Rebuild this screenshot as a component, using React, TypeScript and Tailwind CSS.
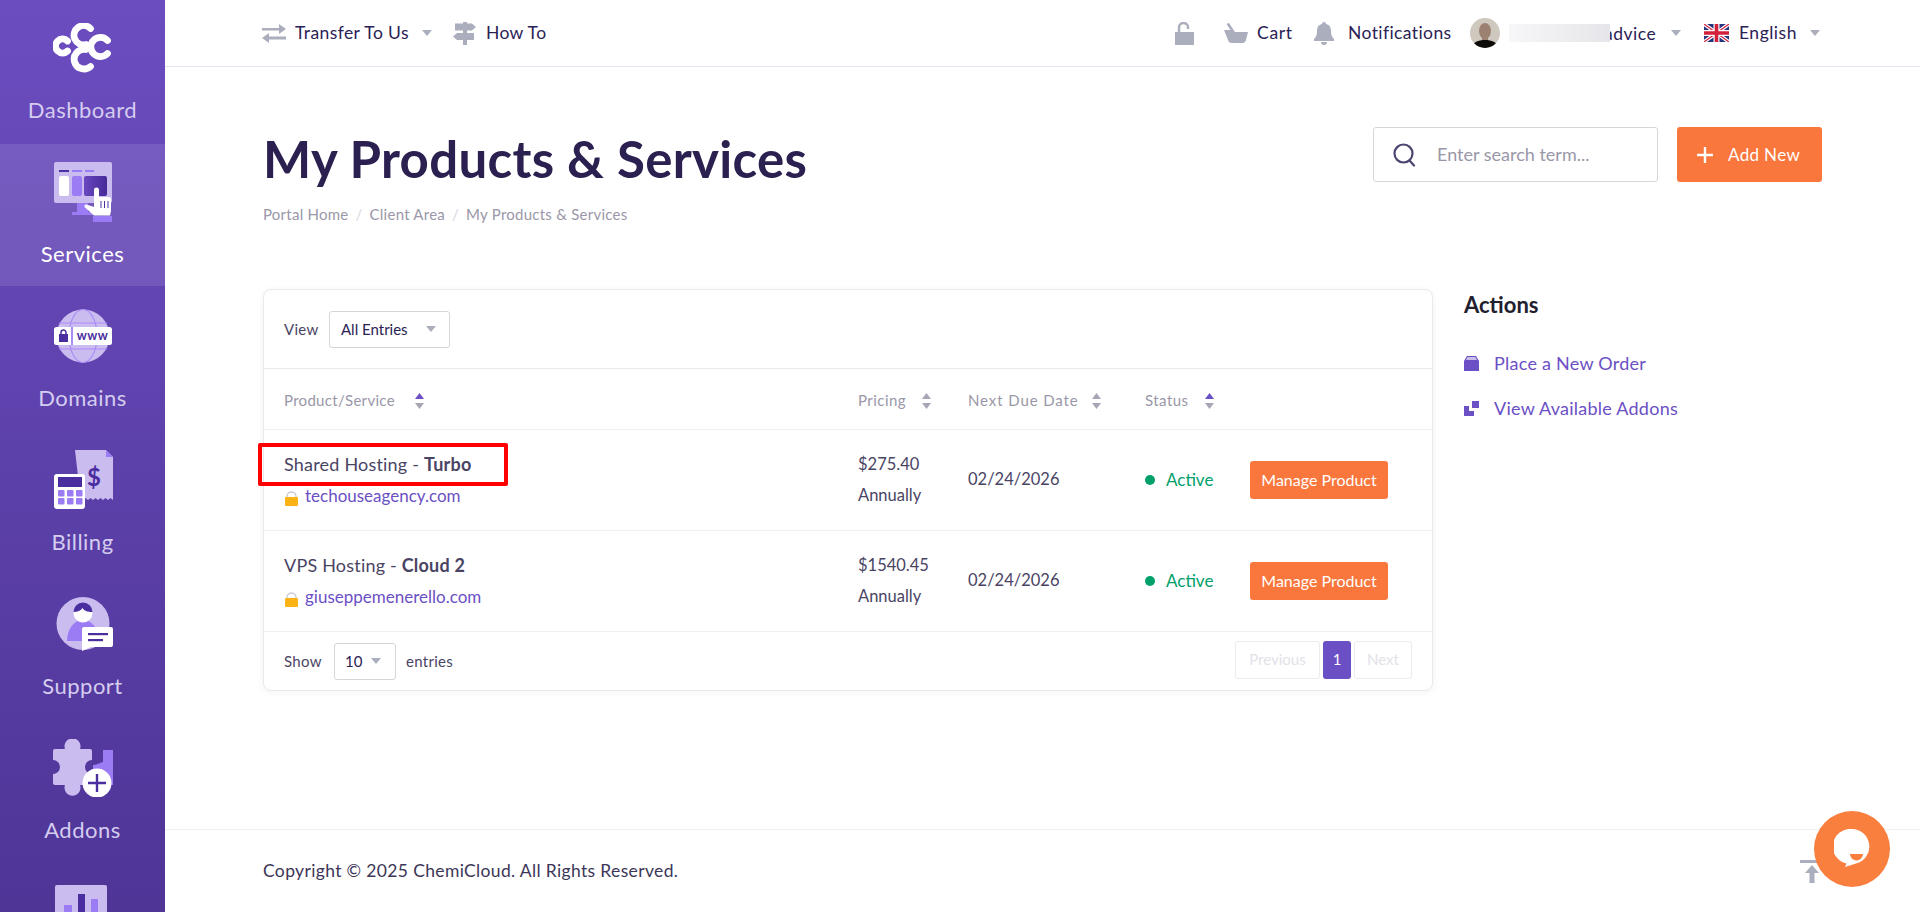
import React from "react";

const LIGHT = "#cbbcf0";
const MID = "#9b7cf5";
const DARK = "#4a2ea0";
const GRAY = "#abaebc";

function Logo() {
  return (
    <svg width="60" height="50" viewBox="0 0 60 50" fill="none" stroke="#fff" strokeWidth="6.800" strokeLinecap="round">
      <path d="M14.500 18A7 7 0 1 0 14.500 28" />
      <path d="M37.500 5.500A9.600 9.600 0 1 0 33 21.500" />
      <path d="M32.500 26.500A9.800 9.800 0 1 0 37.500 43.500" />
      <path d="M54.500 17.500A9.600 9.600 0 1 0 54.500 30.500" />
    </svg>
  );
}

function ServicesIcon() {
  return (
    <svg width="60" height="60" viewBox="0 0 60 60">
      <defs>
        <linearGradient id="sv" x1="0" y1="0" x2="1" y2="0">
          <stop offset="0" stopColor="#6a48c0" />
          <stop offset="1" stopColor="#452a98" />
        </linearGradient>
      </defs>
      <rect x="1" y="0" width="58" height="41" rx="2" fill={LIGHT} />
      <rect x="6" y="8" width="10" height="2" fill={DARK} />
      <rect x="19" y="8" width="10" height="2" fill={MID} />
      <rect x="32" y="8" width="9" height="2" fill={MID} />
      <rect x="6" y="14" width="10" height="20" rx="2" fill="#fff" />
      <rect x="19" y="14" width="10" height="20" rx="2" fill={MID} />
      <rect x="31" y="14" width="23" height="20" rx="2" fill="url(#sv)" />
      <rect x="24" y="41" width="11" height="9" fill={MID} />
      <rect x="19" y="50" width="24" height="3" fill={MID} />
      <path d="M41 28a2.500 2.500 0 0 1 5 0v7h9.500a2.500 2.500 0 0 1 2.500 2.500V49l-1 4.500H41L32 45.500c-1.500-1.500 0-3 1.500-3l7.500 2.500z" fill="#fff" />
      <path d="M48 39v7M51.500 39v7M55 39v7" stroke={DARK} strokeWidth="1" />
      <rect x="40" y="54" width="19" height="6" fill={MID} />
    </svg>
  );
}

function DomainsIcon() {
  return (
    <svg width="60" height="54" viewBox="0 0 60 54" fill="none">
      <circle cx="30" cy="27" r="26.500" fill={LIGHT} />
      <ellipse cx="30" cy="27" rx="14" ry="26.500" stroke="#a98cf5" strokeWidth="1.200" />
      <path d="M6 14h48M6 40h48" stroke="#a98cf5" strokeWidth="1.200" />
      <rect x="1" y="18" width="58" height="18" rx="2.500" fill="#fff" />
      <rect x="18" y="18" width="2" height="18" fill="#a98cf5" />
      <path d="M6 25h9v8H6z" fill={DARK} />
      <path d="M8 25v-1.500a2.500 2.500 0 0 1 5 0V25" stroke={DARK} strokeWidth="1.500" />
      <text x="39.500" y="31" textAnchor="middle" fontSize="12.500" fontWeight="700" fontFamily="Lato, sans-serif" fill={DARK} letterSpacing="0.400">www</text>
    </svg>
  );
}

function BillingIcon() {
  return (
    <svg width="60" height="60" viewBox="0 0 60 60">
      <path d="M22 0h31l7 7v43l-2.500-2-2.500 2-2.500-2-2.500 2-2.500-2-2.500 2-2.500-2-2.500 2-2.500-2-2.500 2-2.500-2-2.500 2-2.500-2z" fill={LIGHT} />
      <path d="M53 0l7 7h-7z" fill={MID} />
      <text x="41" y="36" textAnchor="middle" fontSize="24" fontWeight="700" fontFamily="Lato, sans-serif" fill={DARK}>$</text>
      <rect x="1" y="24" width="31" height="35" rx="3" fill="#fff" />
      <rect x="5" y="27" width="24" height="10" fill={DARK} />
      {[5, 14, 23].map((x) =>
        [40, 48].map((y) => <rect key={`${x}-${y}`} x={x} y={y} width="6.500" height="6.500" rx="1" fill={MID} />)
      )}
    </svg>
  );
}

function SupportIcon() {
  return (
    <svg width="60" height="54" viewBox="0 0 60 54">
      <circle cx="30" cy="26.500" r="26.500" fill={LIGHT} />
      <path d="M14 44c0-12 7-21 16-21s16 9 16 21z" fill={MID} />
      <circle cx="30" cy="16" r="9.500" fill="#fff" />
      <path d="M20.500 15a9.500 9.500 0 0 1 19 0c-5 0-8-1-10-4-1.500 2.500-5 4-9 4z" fill={DARK} />
      <path d="M31 30h27a2 2 0 0 1 2 2v16a2 2 0 0 1-2 2H38l-9 4V32a2 2 0 0 1 2-2z" fill="#fff" />
      <rect x="35" y="36" width="20" height="2.200" fill={DARK} />
      <rect x="35" y="42" width="15" height="2.200" fill={DARK} />
    </svg>
  );
}

function AddonsIcon() {
  return (
    <svg width="60" height="58" viewBox="0 0 60 58">
      <path d="M50 11h10v35H40V26c3 0 6-2 10-3z" fill={MID} />
      <path d="M2 10H12a8 8 0 1 1 15 0H37a2 2 0 0 1 2 2V21a7 7 0 0 0 0 14V44a2 2 0 0 1-2 2H27a8 8 0 1 1-15 0H2a2 2 0 0 1-2-2V35a7 7 0 0 0 0-14V12a2 2 0 0 1 2-2z" fill={LIGHT} />
      <circle cx="44" cy="44" r="14.500" fill="#fff" />
      <path d="M44 35v18M35 44h18" stroke={DARK} strokeWidth="2.400" />
    </svg>
  );
}

function ReportsIcon() {
  return (
    <svg width="60" height="54" viewBox="0 0 60 54">
      <rect x="2" y="0" width="52" height="50" rx="2" fill={LIGHT} />
      <rect x="11" y="20" width="8" height="30" fill={MID} />
      <rect x="25" y="9" width="7" height="41" fill={DARK} />
      <rect x="38" y="14" width="7" height="36" fill={MID} />
    </svg>
  );
}

function NavItem({ icon, label, active }: { icon: React.ReactNode; label?: string; active?: boolean }) {
  return (
    <div className={active ? "h-[142px] mb-[2px] bg-white/10 flex flex-col items-center pt-4" : "h-[144px] flex flex-col items-center pt-4"}>
      <div className="h-16 w-[60px] flex items-center justify-center">{icon}</div>
      {label && <div className={active ? "mt-[18px] text-[22px] leading-6 tracking-[0.5px] text-white" : "mt-[18px] text-[22px] leading-6 tracking-[0.5px] text-[#d5cdf0]"}>{label}</div>}
    </div>
  );
}

function Caret({ className = "" }: { className?: string }) {
  return (
    <svg width="10" height="6" viewBox="0 0 10 6" className={className}>
      <path d="M0 0h10L5 6z" fill={GRAY} />
    </svg>
  );
}

function Sort({ up }: { up?: boolean }) {
  return (
    <svg width="9" height="16" viewBox="0 0 9 16" className="ml-[14px] mt-[4px] shrink-0">
      <path d="M4.500 0L9 6H0z" fill={up ? "#6b4fc4" : "#a8a6b5"} />
      <path d="M0 10h9l-4.500 6z" fill="#a8a6b5" />
    </svg>
  );
}

function Lock() {
  return (
    <svg width="13" height="15" viewBox="0 0 13 15" className="shrink-0">
      <path d="M2 7V5.500a4.500 4.500 0 0 1 9 0V7" fill="none" stroke="#c9c7d2" strokeWidth="1.300" />
      <rect x="0" y="6" width="13" height="9" rx="1" fill="#fcb316" />
    </svg>
  );
}

function Row({ name, plan, domain, price, highlight }: { name: string; plan: string; domain: string; price: string; highlight?: boolean }) {
  return (
    <tr className="h-[101px] border-b border-[#f0eff4]">
      <td className="pl-5 align-middle">
        <div className="relative">
          <div className="text-[18px] leading-[31px] tracking-[0.2px] text-[#4a4464]">
            {name} - <b className="font-bold">{plan}</b>
          </div>
          <div className="flex items-center text-[17px] leading-[31px] text-[#6b4fc4]">
            <span className="pl-px pt-[7px] mr-[7px] flex"><Lock /></span>
            {domain}
          </div>
          {highlight && <div className="absolute left-[-26px] top-[-6px] w-[250px] h-[43px] border-[4px] border-[#fe0000] rounded-[2px]" />}
        </div>
      </td>
      <td className="pl-5 align-middle text-[#4a4464]">
        <div className="text-[16.500px] leading-[31px]">{price}</div>
        <div className="text-[16.500px] leading-[31px]">Annually</div>
      </td>
      <td className="pl-5 align-middle text-[16.500px] text-[#4a4464]">02/24/2026</td>
      <td className="pl-5 align-middle">
        <div className="flex items-center text-[17px] text-[#00a06a]">
          <span className="w-[10px] h-[10px] rounded-full bg-[#00a06a] mr-[11px]" />
          Active
        </div>
      </td>
      <td className="pl-5 align-middle">
        <div className="w-[138px] h-[38px] rounded-[3px] bg-[#f9763d] text-white text-[16px] flex items-center justify-center">Manage Product</div>
      </td>
    </tr>
  );
}

function HeadCell({ label, labelClass, up }: { label: string; labelClass: string; up?: boolean }) {
  return (
    <th className="pl-5 font-normal">
      <span className="flex items-center">
        <span className={labelClass}>{label}</span>
        <Sort up={up} />
      </span>
    </th>
  );
}

export default function App() {
  return (
    <div className="relative h-[912px] w-[1920px] overflow-hidden flex bg-white font-[Lato,sans-serif]">
      <aside className="w-[165px] h-[912px] overflow-hidden shrink-0 bg-gradient-to-b from-[#6c4dc0] to-[#4e3596]">
        <NavItem icon={<Logo />} label="Dashboard" />
        <NavItem icon={<ServicesIcon />} label="Services" active />
        <NavItem icon={<DomainsIcon />} label="Domains" />
        <NavItem icon={<BillingIcon />} label="Billing" />
        <NavItem icon={<SupportIcon />} label="Support" />
        <NavItem icon={<AddonsIcon />} label="Addons" />
        <NavItem icon={<ReportsIcon />} />
      </aside>

      <div className="flex-1 flex flex-col min-w-0">
        <header className="h-[67px] shrink-0 border-b border-[#e4e3f3] flex items-center justify-between pl-[97px] pr-[100px] text-[17.500px] text-[#2a2255]">
          <div className="flex items-center">
            <svg width="24" height="19" viewBox="0 0 24 19"><path d="M0 4h17V0l7 5-7 5V6.500H0z" fill={GRAY} /><path d="M24 12.500H7V9l-7 5 7 5v-3.500h17z" fill={GRAY} /></svg>
            <span className="ml-[9px] w-[114px] whitespace-nowrap tracking-[0.4px]">Transfer To Us</span>
            <Caret className="ml-[13px]" />
            <svg width="23" height="23" viewBox="0 0 23 23" className="ml-[21px]"><path d="M10 0h4v23h-4z" fill={GRAY} /><path d="M2 1.500h17l4 3.500-4 3.500H2zM21 11H4l-4 3.500L4 18h17z" fill={GRAY} /></svg>
            <span className="ml-[10px] w-[60px] whitespace-nowrap tracking-[0.35px]">How To</span>
          </div>
          <div className="flex items-center">
            <svg width="19" height="23" viewBox="0 0 19 23"><path d="M0 10h19v13H0z" fill={GRAY} /><path d="M4 10V5.500a4.500 4.500 0 0 1 9 0V7" fill="none" stroke={GRAY} strokeWidth="2.500" /></svg>
            <svg width="24" height="20" viewBox="0 0 24 20" className="ml-[30px]"><path d="M5 0l6 9h13l-2 8a4 4 0 0 1-4 3H8a4 4 0 0 1-4-3L0 7h6.500L2.500 1z" fill={GRAY} /></svg>
            <span className="ml-[9px] w-[36px] whitespace-nowrap tracking-[0.7px]">Cart</span>
            <svg width="20" height="23" viewBox="0 0 20 23" className="ml-[21px]"><path d="M10 0a2 2 0 0 1 2 2c4 1 5 4 5 7 0 4 1 6 3 8v2H0v-2c2-2 3-4 3-8 0-3 1-6 5-7a2 2 0 0 1 2-2zM7 20h6a3 3 0 0 1-6 0z" fill={GRAY} /></svg>
            <span className="ml-[14px] w-[102px] whitespace-nowrap tracking-[0.4px]">Notifications</span>
            <svg width="30" height="30" viewBox="0 0 30 30" className="ml-[20px] rounded-full">
              <rect width="30" height="30" fill="#cfc8be" />
              <ellipse cx="15" cy="13" rx="6" ry="8" fill="#9c8170" />
              <rect x="12" y="18" width="6" height="6" fill="#9c8170" />
              <path d="M2 30c1-6 6-8 13-8s12 2 13 8z" fill="#0e0c0a" />
            </svg>
            <div className="relative ml-[9px] w-[101px] h-[18px] bg-gradient-to-r from-[#f7f7f9] to-[#e6e6ea] blur-[0.6px] z-10" />
            <span className="ml-[-6px] w-[51px] pt-[2px] whitespace-nowrap tracking-[0.5px]">advice</span>
            <Caret className="ml-[16px]" />
            <svg width="25" height="18" viewBox="0 0 25 18" className="ml-[23px]">
              <rect width="25" height="18" fill="#23357f" />
              <path d="M0 0l25 18M25 0L0 18" stroke="#fff" strokeWidth="3.600" />
              <path d="M0 0l25 18M25 0L0 18" stroke="#d3203c" strokeWidth="1.200" />
              <path d="M12.500 0v18M0 9h25" stroke="#fff" strokeWidth="6" />
              <path d="M12.500 0v18M0 9h25" stroke="#d3203c" strokeWidth="3.600" />
            </svg>
            <span className="ml-[10px] w-[58px] whitespace-nowrap tracking-[0.5px]">English</span>
            <Caret className="ml-[13px]" />
          </div>
        </header>

        <main className="flex-1 pl-[98px] pr-[98px] pt-[60px]">
          <div className="flex justify-between items-start h-[102px]">
            <div>
              <h1 className="text-[51px] leading-[60px] font-bold text-[#2b2050] tracking-[0.3px] mt-[2px] whitespace-nowrap">My Products &amp; Services</h1>
              <div className="mt-[15px] flex items-center text-[15px] leading-5 text-[#9a97a8] tracking-[0.25px]">
                <span>Portal Home</span>
                <span className="mx-[7px] text-[#d8d7de]">/</span>
                <span>Client Area</span>
                <span className="mx-[7px] text-[#d8d7de]">/</span>
                <span>My Products &amp; Services</span>
              </div>
            </div>
            <div className="flex gap-[19px]">
              <div className="w-[285px] h-[55px] border border-[#d6d5dc] rounded-[3px] flex items-center pl-[19px]">
                <svg width="24" height="24" viewBox="0 0 24 24" fill="none" stroke="#4b4570" strokeWidth="2.200" strokeLinecap="round">
                  <circle cx="10.500" cy="10.500" r="9" />
                  <path d="M16.500 17.500L21 22.500" />
                </svg>
                <input placeholder="Enter search term..." className="ml-[20px] w-[200px] outline-none text-[18px] text-[#4a4464] placeholder:text-[#9a97a8] bg-transparent" />
              </div>
              <div className="w-[145px] h-[55px] rounded-[3px] bg-[#f9763d] text-white text-[17px] flex items-center pl-[20px]">
                <svg width="16" height="16" viewBox="0 0 16 16"><path d="M8 0v16M0 8h16" stroke="#fff" strokeWidth="2.400" /></svg>
                <span className="ml-[15px] whitespace-nowrap tracking-[0.35px]">Add New</span>
              </div>
            </div>
          </div>

          <div className="flex mt-[60px] items-start">
            <section className="w-[1170px] shrink-0 h-[402px] border border-[#e8e8ee] rounded-[8px] shadow-[0_1px_6px_rgba(60,50,110,0.06)] bg-white">
              <div className="h-[79px] border-b border-[#e8e8ee] flex items-center pl-[20px] text-[15px] text-[#4a4464]">
                <span className="w-[45px] tracking-[0.3px]">View</span>
                <div className="w-[121px] h-[37px] border border-[#d6d5dc] rounded-[3px] flex items-center pl-[11px] text-[#2a2255]">
                  <span className="w-[73px] whitespace-nowrap">All Entries</span>
                  <Caret className="ml-[12px]" />
                </div>
              </div>
              <table className="w-full table-fixed border-collapse">
                <colgroup>
                  <col className="w-[574px]" />
                  <col className="w-[110px]" />
                  <col className="w-[177px]" />
                  <col className="w-[105px]" />
                  <col />
                </colgroup>
                <thead>
                  <tr className="h-[60px] border-b border-[#f0eff4] text-[15px] text-[#9a97a8] text-left">
                    <HeadCell label="Product/Service" labelClass="w-[117px] pt-[2px] whitespace-nowrap tracking-[0.3px]" up />
                    <HeadCell label="Pricing" labelClass="w-[50px] pt-[2px] whitespace-nowrap tracking-[0.45px]" />
                    <HeadCell label="Next Due Date" labelClass="w-[110px] pt-[2px] whitespace-nowrap tracking-[0.9px]" />
                    <HeadCell label="Status" labelClass="w-[46px] pt-[2px] whitespace-nowrap tracking-[0.45px]" up />
                    <th />
                  </tr>
                </thead>
                <tbody>
                  <Row name="Shared Hosting" plan="Turbo" domain="techouseagency.com" price="$275.40" highlight />
                  <Row name="VPS Hosting" plan="Cloud 2" domain="giuseppemenerello.com" price="$1540.45" />
                </tbody>
              </table>
              <div className="h-[59px] flex items-center justify-between pl-[20px] pr-[20px] text-[15px] text-[#4a4464]">
                <div className="flex items-center">
                  <span className="w-[50px] tracking-[0.3px]">Show</span>
                  <div className="w-[62px] h-[37px] border border-[#d6d5dc] rounded-[3px] flex items-center pl-[10px] text-[#2a2255]">
                    <span className="w-[23px]">10</span>
                    <Caret className="ml-[3px]" />
                  </div>
                  <span className="ml-[10px] tracking-[0.3px]">entries</span>
                </div>
                <div className="flex items-center gap-[3px] mt-[-3px] text-[15px] text-[#e3e2e8]">
                  <div className="w-[85px] h-[38px] border border-[#ecebf0] rounded-[3px] flex items-center justify-center">Previous</div>
                  <div className="w-[28px] h-[38px] rounded-[3px] bg-[#6b4fc4] text-white flex items-center justify-center">1</div>
                  <div className="w-[58px] h-[38px] border border-[#ecebf0] rounded-[3px] flex items-center justify-center">Next</div>
                </div>
              </div>
            </section>
            <aside className="ml-[31px] pt-[2px]">
              <h3 className="text-[22px] leading-7 font-bold text-[#22202e]">Actions</h3>
              <div className="mt-[32px] flex flex-col gap-[21px] text-[18px] leading-6 text-[#6b4fc4] tracking-[0.25px]">
                <div className="flex items-center">
                  <svg width="15" height="15" viewBox="0 0 15 15"><path d="M3 0h9l3 5v10H0V5z" fill="#6b4fc4" /><path d="M3.500 1h8l1.500 3H2z" fill="#c9bdea" /></svg>
                  <span className="ml-[15px] whitespace-nowrap">Place a New Order</span>
                </div>
                <div className="flex items-center">
                  <svg width="15" height="15" viewBox="0 0 15 15"><path d="M0 5h5v5h5v5H0z" fill="#6b4fc4" /><rect x="8" y="0" width="7" height="7" fill="#6b4fc4" /></svg>
                  <span className="ml-[15px] whitespace-nowrap">View Available Addons</span>
                </div>
              </div>
            </aside>
          </div>
        </main>

        <footer className="h-[83px] shrink-0 border-t border-[#f0eff4] flex items-center justify-between pl-[98px] pr-[100px] text-[17.500px] text-[#3c3658] tracking-[0.35px]">
          <span>Copyright © 2025 ChemiCloud. All Rights Reserved.</span>
          <svg width="20" height="23" viewBox="0 0 20 23" className="mt-[1px]"><path d="M0 0h20v3H0z" fill={GRAY} /><path d="M12 5l7 8h-4.500v10h-5V13H5z" fill={GRAY} /></svg>
        </footer>
      </div>

      <div className="absolute right-[30px] bottom-[25px] w-[76px] h-[76px] rounded-full bg-[#f97f3f] flex items-center justify-center">
        <svg width="36" height="40" viewBox="0 0 36 40">
          <path d="M18 0a17.500 17.500 0 0 1 4 34.500L11 38l1.500-3.500A17.500 17.500 0 0 1 18 0z" fill="#fff" />
          <path d="M16 25h13a6.500 6.500 0 0 1-13 0z" fill="#f97f3f" />
        </svg>
      </div>
    </div>
  );
}
